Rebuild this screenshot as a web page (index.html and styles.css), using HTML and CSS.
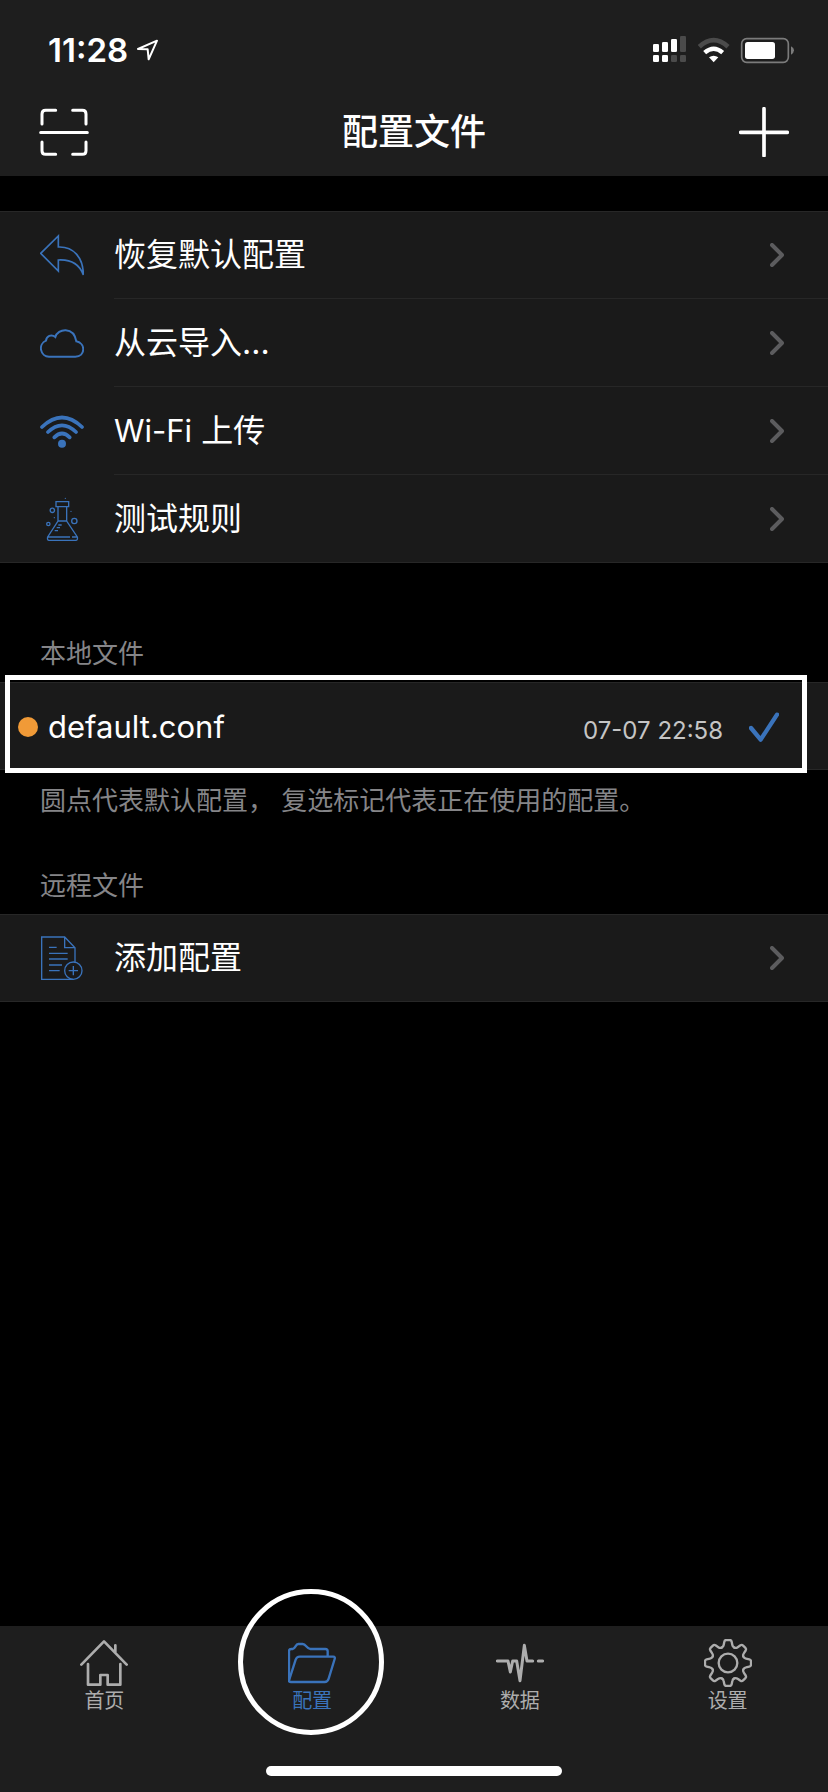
FILE: index.html
```html
<!DOCTYPE html>
<html lang="zh-CN">
<head>
<meta charset="utf-8">
<meta name="viewport" content="width=device-width, initial-scale=1">
<title>配置文件</title>
<link rel="stylesheet" href="styles.css">
</head>
<body>
<div class="app">
  <header class="header">
    <div class="status">
      <div class="status-left">
        <time class="clock">11:28</time>
        <svg class="location" viewBox="405 114 72 72" aria-hidden="true"><path d="M411 147 468 122 443 178 440 148Z" fill="none" stroke="#fff" stroke-width="6" stroke-linejoin="round"/></svg>
      </div>
      <svg class="status-icons" viewBox="714 99 429 93" aria-hidden="true">
        <g fill="#fff">
          <rect x="717" y="129" width="18" height="24" rx="4"/><rect x="744" y="123" width="18" height="30" rx="4"/><rect x="771" y="114" width="18" height="39" rx="4"/>
          <rect x="717" y="162" width="18" height="21" rx="4"/><rect x="744" y="162" width="18" height="21" rx="4"/>
          <rect x="993" y="123" width="90" height="51" rx="8"/>
          <path d="M899 184 885 169Q899 160 913 169Z"/>
        </g>
        <g fill="#4b4b4b">
          <rect x="798" y="105" width="18" height="48" rx="4"/><rect x="771" y="162" width="18" height="21" rx="4"/><rect x="798" y="162" width="18" height="21" rx="4"/>
        </g>
        <path d="M856 137Q899 98 942 137" fill="none" stroke="#4b4b4b" stroke-width="14"/>
        <path d="M872 155Q899 131 926 155" fill="none" stroke="#fff" stroke-width="13"/>
        <rect x="983" y="113" width="140" height="71" rx="15" fill="none" stroke="#7b7b7b" stroke-width="5"/>
        <path d="M1131 136Q1140 141 1140 148Q1140 156 1131 161Z" fill="#7b7b7b"/>
      </svg>
    </div>
    <div class="navbar">
      <button class="nav-button" type="button" aria-label="扫描">
        <svg viewBox="117 321 150 150"><path d="M126 372V342Q126 331 137 331H167M218 331H247Q258 331 258 342V372M258 426V452Q258 463 247 463H218M167 463H137Q126 463 126 452V426M122 397.500H262" fill="none" stroke="#fff" stroke-width="9" stroke-linecap="round"/></svg>
      </button>
      <h1 class="title">配置文件</h1>
      <button class="nav-button" type="button" aria-label="添加">
        <svg viewBox="975 321 150 150"><path d="M980 397H1120M1050 326V467" fill="none" stroke="#fff" stroke-width="11" stroke-linecap="round"/></svg>
      </button>
    </div>
  </header>

  <main class="content">
    <div class="group">
      <button class="row" type="button">
        <svg class="row-icon" viewBox="120 99 132 132"><path d="M122 160 175 108V141C220 139 250 172 250 225C237 189 209 178 175 180V213Z" stroke-width="5"/></svg>
        <span class="row-label">恢复默认配置</span>
        <svg class="chevron" viewBox="0 0 14 24"><path d="M2 2 12 12 2 22"/></svg>
      </button>
      <button class="row" type="button">
        <svg class="row-icon" viewBox="120 363 132 132"><path d="M147 470A25 25 0 0 1 138 422C139 408 154 401 166 411C173 385 221 378 229 424C258 430 256 470 226 470Z" stroke-width="6"/></svg>
        <span class="row-label">从云导入...</span>
        <svg class="chevron" viewBox="0 0 14 24"><path d="M2 2 12 12 2 22"/></svg>
      </button>
      <button class="row" type="button">
        <svg class="row-icon" viewBox="120 87 132 132"><g stroke-width="11" stroke-linecap="round"><path d="M126 141Q186 84 246 141M144 156Q186 116 228 156M163 172Q186 149 209 172"/></g><circle class="solid" cx="186" cy="191" r="12"/></svg>
        <span class="row-label"><span class="latin">Wi-Fi</span> 上传</span>
        <svg class="chevron" viewBox="0 0 14 24"><path d="M2 2 12 12 2 22"/></svg>
      </button>
      <button class="row" type="button">
        <svg class="row-icon" viewBox="120 351 132 132"><g stroke-width="4"><path d="M168 365H206V380H168ZM174 380V423L143 471Q141 481 147 481H227Q234 481 232 471L200 423V380M174 423H200M143 471H210M216 471H230M175 435H185M170 443H180M164 452H174"/><circle cx="157" cy="391" r="6.500"/><circle cx="223" cy="423" r="8"/><circle cx="145" cy="432" r="5"/></g><g class="solid"><circle cx="196" cy="355" r="2"/><circle cx="213" cy="394" r="2"/><circle cx="163" cy="413" r="2"/></g></svg>
        <span class="row-label">测试规则</span>
        <svg class="chevron" viewBox="0 0 14 24"><path d="M2 2 12 12 2 22"/></svg>
      </button>
    </div>

    <h2 class="section-title section-title-first">本地文件</h2>
    <div class="group">
      <button class="row file-row" type="button">
        <span class="dot"></span>
        <span class="row-label"><span class="latin">default.conf</span></span>
        <span class="date">07-07 22:58</span>
        <svg class="check" viewBox="1005 273 90 90"><path d="M1011 321 1040 356 1089 281" fill="none" stroke-width="13" stroke-linecap="round" stroke-linejoin="round"/></svg>
        <span class="frame"></span>
      </button>
    </div>
    <p class="note">圆点代表默认配置， 复选标记代表正在使用的配置。</p>

    <h2 class="section-title">远程文件</h2>
    <div class="group">
      <button class="row" type="button">
        <svg class="row-icon" viewBox="120 258 132 132"><g stroke-width="4"><path d="M225 336V293L194 261H125V388H220M194 261V293H225M147 292H170M147 310H203M147 327H203M147 345H186M147 362H179M206 362H234M220 348V376"/><circle cx="220" cy="362" r="26"/></g></svg>
        <span class="row-label">添加配置</span>
        <svg class="chevron" viewBox="0 0 14 24"><path d="M2 2 12 12 2 22"/></svg>
      </button>
    </div>
  </main>

  <footer class="footer">
    <nav class="tabs">
      <a class="tab" href="#home">
        <svg class="tab-icon" viewBox="243 177 144 144"><g stroke-width="8" stroke-linecap="round" stroke-linejoin="round"><path d="M247 254 315 184 383 254M349 216V196M267 252V314H304V285H326V314H364V252"/></g></svg>
        <span>首页</span>
      </a>
      <a class="tab tab-active" href="#config" aria-current="page">
        <svg class="tab-icon" viewBox="867 177 144 144"><g stroke-width="7" stroke-linejoin="round"><path d="M870 302V213Q870 207 877 207H881C889 207 889 192 898 192H911C921 192 924 207 934 207H979Q986 207 986 214V229"/><path d="M870 301 890 239Q893 230 902 230H1003Q1009 230 1007 237L989 296Q986 306 977 306H876Q868 306 870 300Z"/></g></svg>
        <span>配置</span>
        <span class="ring"></span>
      </a>
      <a class="tab" href="#data">
        <svg class="tab-icon" viewBox="249 177 144 144"><g stroke-width="9" stroke-linecap="round" stroke-linejoin="round"><path d="M253 243H285L292 276 299 243H311L321 302 334 196 342 243H359M376 243H389"/></g></svg>
        <span>数据</span>
      </a>
      <a class="tab" href="#settings">
        <svg class="tab-icon" viewBox="873 177 144 144">
          <defs><path id="tooth" d="M926 203Q931 201 932 195L934 185Q935 180 940 180H950Q955 180 956 185L958 195Q959 201 964 203" stroke-linecap="round"/></defs>
          <g stroke-width="7"><use href="#tooth"/><use href="#tooth" transform="rotate(45 945 249)"/><use href="#tooth" transform="rotate(90 945 249)"/><use href="#tooth" transform="rotate(135 945 249)"/><use href="#tooth" transform="rotate(180 945 249)"/><use href="#tooth" transform="rotate(225 945 249)"/><use href="#tooth" transform="rotate(270 945 249)"/><use href="#tooth" transform="rotate(315 945 249)"/><circle cx="945" cy="249" r="28"/></g>
        </svg>
        <span>设置</span>
      </a>
    </nav>
    <div class="home-indicator"></div>
  </footer>
</div>
</body>
</html>
```

FILE: styles.css
```css
:root {
  --bar: #1e1e1e;
  --cell: #1a1a1a;
  --line: #272727;
  --blue: #3a73bb;
  --muted: #858588;
}

* {
  box-sizing: border-box;
}

body {
  margin: 0;
  background: #000;
  color: #fff;
  font-family: Inter, "Noto Sans CJK SC", sans-serif;
}

button {
  margin: 0;
  padding: 0;
  border: 0;
  background: none;
  color: inherit;
  font: inherit;
  text-align: left;
}

svg {
  display: block;
  flex: none;
}

.app {
  display: flex;
  flex-direction: column;
  min-height: 100vh;
}

.header {
  background: var(--bar);
}

.status {
  display: flex;
  align-items: center;
  justify-content: space-between;
  height: 88px;
  padding: 11px 33px 0 48px;
}

.status-left {
  display: flex;
  align-items: center;
  gap: 8px;
}

.clock {
  font-size: 33px;
  font-weight: 600;
  line-height: 40px;
}

.location {
  width: 24px;
  height: 24px;
}

.status-icons {
  width: 143px;
  height: 31px;
}

.navbar {
  display: flex;
  align-items: center;
  justify-content: space-between;
  height: 88px;
  padding: 0 39px;
}

.nav-button svg {
  width: 50px;
  height: 50px;
}

.title {
  margin: 0;
  font-size: 36px;
  font-weight: 500;
  line-height: 48px;
}

.content {
  flex: 1;
  padding-top: 35px;
}

.group {
  border-top: 1px solid var(--line);
  border-bottom: 1px solid var(--line);
  background: var(--cell);
}

.row {
  position: relative;
  display: flex;
  align-items: center;
  width: 100%;
  height: 86px;
  padding: 0 44px 0 40px;
}

.row + .row {
  height: 88px;
  padding-top: 2px;
}

.row + .row::before {
  position: absolute;
  top: 0;
  right: 0;
  left: 114px;
  height: 1px;
  background: var(--line);
  content: "";
}

.row-icon {
  width: 44px;
  height: 44px;
  margin-right: 30px;
  fill: none;
  stroke: var(--blue);
}

.row-icon .solid {
  fill: var(--blue);
  stroke: none;
}

.row-label {
  flex: 1;
  font-size: 32px;
  line-height: 44px;
}

.latin {
  font-size: 31px;
}

.chevron {
  width: 14px;
  height: 24px;
  fill: none;
  stroke: #5c5c5e;
  stroke-width: 4;
  stroke-linecap: round;
  stroke-linejoin: round;
}

.section-title,
.note {
  margin: 0;
  padding: 0 40px;
  color: var(--muted);
  font-size: 26px;
  font-weight: 400;
  line-height: 36px;
}

.section-title {
  padding-top: 49px;
  padding-bottom: 10px;
}

.section-title-first {
  padding-top: 73px;
}

.note {
  padding-top: 13px;
}

.file-row {
  padding: 2px 49px 0 18px;
}

.dot {
  width: 20px;
  height: 20px;
  margin-right: 10px;
  border-radius: 50%;
  background: #f09a37;
}

.date {
  padding-top: 8px;
  color: #c5c5c5;
  font-size: 24px;
  line-height: 32px;
}

.check {
  width: 30px;
  height: 30px;
  margin-left: 26px;
  stroke: var(--blue);
}

.frame {
  position: absolute;
  top: -8px;
  right: 21px;
  bottom: -4px;
  left: 5px;
  border: 5px solid #fff;
}

.footer {
  padding-bottom: 16px;
  background: var(--bar);
}

.tabs {
  display: grid;
  grid-template-columns: repeat(4, 1fr);
  gap: 7px;
  padding: 13px 0 0 4px;
}

.tab {
  position: relative;
  display: flex;
  flex-direction: column;
  align-items: center;
  height: 127px;
  color: #adadad;
  font-size: 20px;
  line-height: 28px;
  text-decoration: none;
}

.tab-active {
  color: var(--blue);
}

.tab-icon {
  width: 48px;
  height: 48px;
  fill: none;
  stroke: currentColor;
}

.ring {
  position: absolute;
  top: -50px;
  left: 50%;
  width: 146px;
  height: 146px;
  margin-left: -74px;
  border: 5px solid #fff;
  border-radius: 50%;
}

.home-indicator {
  width: 296px;
  height: 10px;
  margin: 0 auto;
  border-radius: 5px;
  background: #fff;
}
```
